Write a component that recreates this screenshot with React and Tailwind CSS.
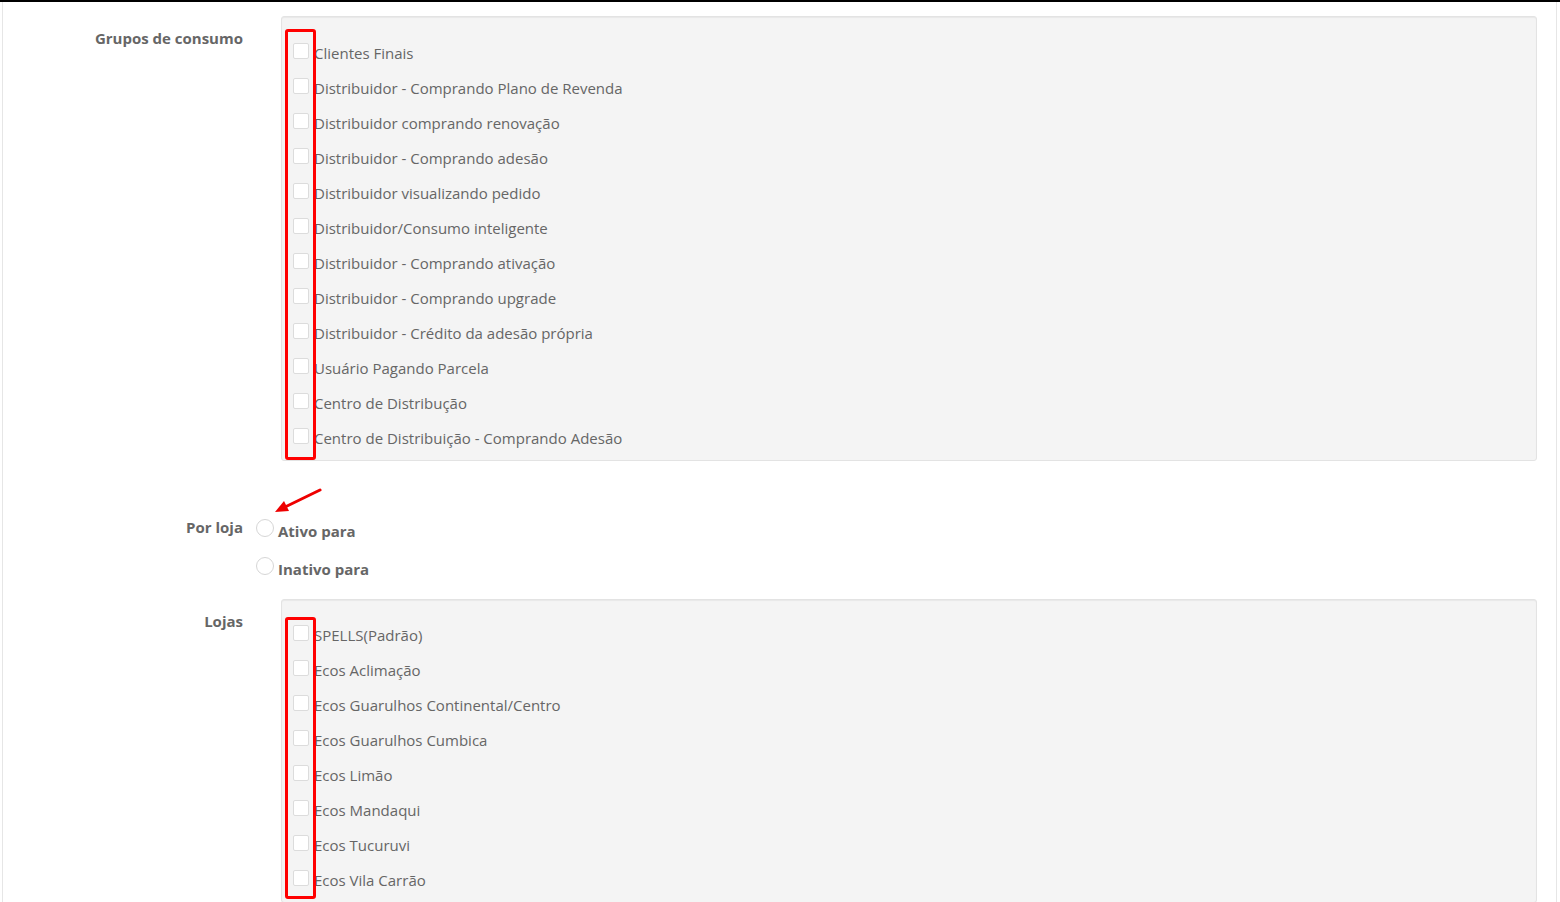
import React from "react";

const grupos = [
  "Clientes Finais",
  "Distribuidor - Comprando Plano de Revenda",
  "Distribuidor comprando renovação",
  "Distribuidor - Comprando adesão",
  "Distribuidor visualizando pedido",
  "Distribuidor/Consumo inteligente",
  "Distribuidor - Comprando ativação",
  "Distribuidor - Comprando upgrade",
  "Distribuidor - Crédito da adesão própria",
  "Usuário Pagando Parcela",
  "Centro de Distribução",
  "Centro de Distribuição - Comprando Adesão",
];

const lojas = [
  "SPELLS(Padrão)",
  "Ecos Aclimação",
  "Ecos Guarulhos Continental/Centro",
  "Ecos Guarulhos Cumbica",
  "Ecos Limão",
  "Ecos Mandaqui",
  "Ecos Tucuruvi",
  "Ecos Vila Carrão",
];

function CheckRow({ label }) {
  return (
    <label className="flex h-[35px] items-start">
      <span className="mt-[7px] h-[16px] w-[16px] shrink-0 rounded-[2px] border border-[#dcdcdc] bg-white" />
      <span className="ml-[5px] leading-[35px]">{label}</span>
    </label>
  );
}

function CheckPanel({ items, markTop, markHeight, padTop }) {
  return (
    <div
      className={`relative w-[1256px] rounded-[3px] border border-[#e3e3e3] bg-[#f4f4f4] pl-[11px] pb-[4px] shadow-[inset_0_1px_1px_rgba(0,0,0,0.05)] ${padTop}`}
    >
      {items.map((item) => (
        <CheckRow key={item} label={item} />
      ))}
      <div
        className="pointer-events-none absolute left-[3px] w-[31px] rounded-[3px] border-[3px] border-[#ff0000]"
        style={{ top: markTop, height: markHeight }}
      />
    </div>
  );
}

function Radio({ label }) {
  return (
    <div className="flex items-start">
      <span className="h-[18px] w-[18px] shrink-0 rounded-full border border-[#d6d6d6] bg-white" />
      <span className="ml-[4px] mt-[2px] text-[15px] font-bold leading-[20px]">{label}</span>
    </div>
  );
}

export default function App() {
  return (
    <div
      className="min-h-[902px] w-[1560px] border-t-2 border-black bg-white text-[#666] text-[15px]"
      style={{ fontFamily: '"Open Sans", "Liberation Sans", sans-serif' }}
    >
      <div className="mx-[2px] min-h-[900px] w-[1555px] border-x border-[#e6e6e6]">
        {/* Grupos de consumo */}
        <div className="flex pt-[14px]">
          <div className="w-[240px] shrink-0 pt-[12px] text-right text-[15px] font-bold leading-[20px]">
            Grupos de consumo
          </div>
          <div className="ml-[38px]">
            <CheckPanel items={grupos} markTop={12} markHeight={431} padTop="pt-[19px]" />
          </div>
        </div>

        {/* Por loja */}
        <div className="relative flex pt-[58px]">
          <div className="-mt-[2px] w-[240px] shrink-0 text-right text-[15px] font-bold leading-[20px]">
            Por loja
          </div>
          <div className="ml-[13px] flex flex-col gap-[16px]">
            <Radio label="Ativo para" />
            <Radio label="Inativo para" />
          </div>
          <svg
            className="absolute left-[270px] top-[26px]"
            width="52"
            height="30"
            viewBox="0 0 52 30"
          >
            <line x1="47" y1="3" x2="10" y2="21" stroke="#ee0000" strokeWidth="3" strokeLinecap="round" />
            <polygon points="2,25 11,14 16,24" fill="#ee0000" />
          </svg>
        </div>

        {/* Lojas */}
        <div className="flex pt-[20px]">
          <div className="w-[240px] shrink-0 pt-[12px] text-right text-[15px] font-bold leading-[20px]">
            Lojas
          </div>
          <div className="ml-[38px]">
            <CheckPanel items={lojas} markTop={17} markHeight={282} padTop="pt-[18px]" />
          </div>
        </div>
      </div>
    </div>
  );
}
